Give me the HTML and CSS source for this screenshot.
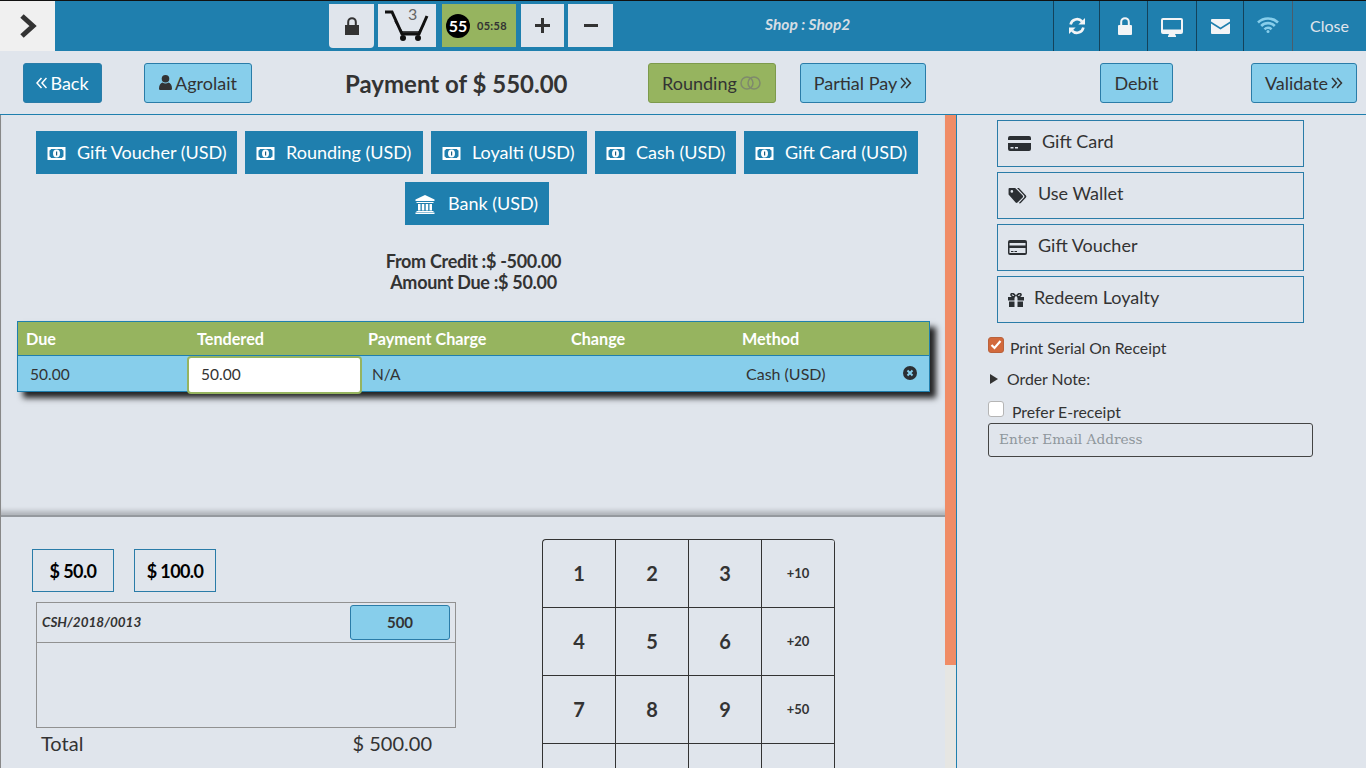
FILE: index.html
```html
<!DOCTYPE html>
<html lang="en">
<head>
    <meta charset="UTF-8">
    <meta name="viewport" content="width=device-width, initial-scale=1.0">
    <title>Payment</title>
    <link rel="stylesheet" href="styles.css">
</head>
<body>
    <!-- Top bar -->
    <header class="topbar">
        <div class="toggle">
            <svg width="18" height="24" viewBox="0 0 18 24"><path d="M3 2l11 10L3 22" fill="none" stroke="#333" stroke-width="5"/></svg>
        </div>
        <div class="tools">
            <div class="tool tool-lock">
                <svg width="14" height="18" viewBox="0 0 14 18"><path d="M0 8h14v10H0z" fill="#333"/><path d="M3.2 9V5a3.8 3.8 0 0 1 7.6 0v4" fill="none" stroke="#333" stroke-width="2"/></svg>
            </div>
            <div class="tool tool-cart">
                <svg width="44" height="31" viewBox="0 0 44 31"><path d="M0 2h7l10 22h17l8-18" fill="none" stroke="#111" stroke-width="3"/><path d="M10 11l7 11h17l5-8" fill="none" stroke="#111" stroke-width="1.500"/><circle cx="18" cy="28" r="3" fill="#111"/><circle cx="33" cy="28" r="3" fill="#111"/></svg>
                <span class="cart-count">3</span>
            </div>
            <div class="tool tool-timer">
                <span class="timer-ball">55</span>
                <span class="timer-time">05:58</span>
            </div>
            <div class="tool tool-plus"><span class="sign"></span></div>
            <div class="tool tool-minus"><span class="sign sign-minus"></span></div>
        </div>
        <div class="shop-name">Shop : Shop2</div>
        <div class="status-bar">
            <div class="status status-sync">
                <svg width="18" height="18" viewBox="0 0 18 18"><path d="M2.600 7.400A6.600 6.600 0 0 1 14 4.400" fill="none" stroke="#f2f4f6" stroke-width="2.600"/><path d="M17 1v6.600h-6.600z" fill="#f2f4f6"/><path d="M15.400 10.600A6.600 6.600 0 0 1 4 13.600" fill="none" stroke="#f2f4f6" stroke-width="2.600"/><path d="M1 17v-6.600h6.600z" fill="#f2f4f6"/></svg>
            </div>
            <div class="status status-lock">
                <svg width="14" height="18" viewBox="0 0 14 18"><path d="M1 8h12a1 1 0 0 1 1 1v8a1 1 0 0 1-1 1H1a1 1 0 0 1-1-1V9a1 1 0 0 1 1-1z" fill="#f2f4f6"/><path d="M3.200 9V5a3.800 3.800 0 0 1 7.600 0v4" fill="none" stroke="#f2f4f6" stroke-width="2"/></svg>
            </div>
            <div class="status status-screen">
                <svg width="22" height="19" viewBox="0 0 22 19"><path d="M2 0h18a2 2 0 0 1 2 2v12a2 2 0 0 1-2 2h-6l1 2v1H7v-1l1-2H2a2 2 0 0 1-2-2V2a2 2 0 0 1 2-2zm0 2v9.500h18V2z" fill="#f2f4f6" fill-rule="evenodd"/></svg>
            </div>
            <div class="status status-mail">
                <svg width="19" height="15" viewBox="0 0 19 15"><path d="M1 0h17a1 1 0 0 1 1 1v1.500l-9.500 6L0 2.500V1a1 1 0 0 1 1-1z" fill="#f2f4f6"/><path d="M0 4.500l9.500 6 9.500-6V14a1 1 0 0 1-1 1H1a1 1 0 0 1-1-1z" fill="#f2f4f6"/></svg>
            </div>
            <div class="status status-wifi">
                <svg width="22" height="16" viewBox="0 0 22 16"><g fill="none" stroke="#87ceeb" stroke-width="2.600"><path d="M1 5.500a14.500 14.500 0 0 1 20 0"/><path d="M4.200 9a9.500 9.500 0 0 1 13.600 0"/><path d="M7.500 12.300a4.800 4.800 0 0 1 7 0"/></g><circle cx="11" cy="14.500" r="1.500" fill="#87ceeb"/></svg>
            </div>
            <div class="status status-close">Close</div>
        </div>
    </header>

    <!-- Payment actions -->
    <div class="actions">
        <button class="btn btn-back">
            <svg class="chev" width="11" height="12" viewBox="0 0 11 12"><path d="M5.500 1L1 6l4.500 5M10.500 1L6 6l4.500 5" fill="none" stroke="#fff" stroke-width="1.500"/></svg>
            Back
        </button>
        <button class="btn btn-customer">
            <svg width="13" height="15" viewBox="0 0 13 15"><circle cx="6.500" cy="3.800" r="3.800" fill="#333"/><path d="M0 13.500C0 10 1.500 8 3.500 7.500c1.800 1.300 4.200 1.300 6 0C11.500 8 13 10 13 13.500c0 1-.7 1.500-1.500 1.500h-10C.7 15 0 14.500 0 13.500z" fill="#333"/></svg>
            Agrolait
        </button>
        <h1 class="title">Payment of $ 550.00</h1>
        <button class="btn btn-rounding">
            Rounding
            <svg width="21" height="14" viewBox="0 0 21 14"><circle cx="7" cy="7" r="6" fill="none" stroke="#7f8a6c" stroke-width="1.500"/><circle cx="14" cy="7" r="6" fill="none" stroke="#7f8a6c" stroke-width="1.500"/></svg>
        </button>
        <button class="btn btn-partial">
            Partial Pay
            <svg class="chev" width="12" height="12" viewBox="0 0 11 12"><path d="M.5 1L5 6l-4.500 5M5.500 1L10 6l-4.500 5" fill="none" stroke="#333" stroke-width="1.500"/></svg>
        </button>
        <button class="btn btn-debit">Debit</button>
        <button class="btn btn-validate">
            Validate
            <svg class="chev" width="12" height="12" viewBox="0 0 11 12"><path d="M.5 1L5 6l-4.500 5M5.500 1L10 6l-4.500 5" fill="none" stroke="#333" stroke-width="1.500"/></svg>
        </button>
    </div>

    <div class="content">
        <main class="left">
            <section class="left-top">
                <div class="methods">
                    <button class="method m-gift"><svg class="money" width="19" height="13" viewBox="0 0 18 13"><path d="M0 0h18v13H0zM3.500 2a2 2 0 0 1-1.500 1.500v6A2 2 0 0 1 3.500 11h11a2 2 0 0 1 1.500-1.500v-6A2 2 0 0 1 14.500 2z" fill="#fff" fill-rule="evenodd"/><ellipse cx="9" cy="6.500" rx="3.500" ry="4" fill="#fff"/><path d="M8.500 4.500h1.200v4H8.500z" fill="#1f5f80"/></svg>Gift Voucher (USD)</button>
                    <button class="method m-round"><svg class="money" width="19" height="13" viewBox="0 0 18 13"><path d="M0 0h18v13H0zM3.500 2a2 2 0 0 1-1.500 1.500v6A2 2 0 0 1 3.500 11h11a2 2 0 0 1 1.500-1.500v-6A2 2 0 0 1 14.500 2z" fill="#fff" fill-rule="evenodd"/><ellipse cx="9" cy="6.500" rx="3.500" ry="4" fill="#fff"/><path d="M8.500 4.500h1.200v4H8.500z" fill="#1f5f80"/></svg>Rounding (USD)</button>
                    <button class="method m-loyal"><svg class="money" width="19" height="13" viewBox="0 0 18 13"><path d="M0 0h18v13H0zM3.500 2a2 2 0 0 1-1.500 1.500v6A2 2 0 0 1 3.500 11h11a2 2 0 0 1 1.500-1.500v-6A2 2 0 0 1 14.500 2z" fill="#fff" fill-rule="evenodd"/><ellipse cx="9" cy="6.500" rx="3.500" ry="4" fill="#fff"/><path d="M8.500 4.500h1.200v4H8.500z" fill="#1f5f80"/></svg>Loyalti (USD)</button>
                    <button class="method m-cash"><svg class="money" width="19" height="13" viewBox="0 0 18 13"><path d="M0 0h18v13H0zM3.500 2a2 2 0 0 1-1.500 1.500v6A2 2 0 0 1 3.500 11h11a2 2 0 0 1 1.500-1.500v-6A2 2 0 0 1 14.500 2z" fill="#fff" fill-rule="evenodd"/><ellipse cx="9" cy="6.500" rx="3.500" ry="4" fill="#fff"/><path d="M8.500 4.500h1.200v4H8.500z" fill="#1f5f80"/></svg>Cash (USD)</button>
                    <button class="method m-card"><svg class="money" width="19" height="13" viewBox="0 0 18 13"><path d="M0 0h18v13H0zM3.500 2a2 2 0 0 1-1.500 1.500v6A2 2 0 0 1 3.500 11h11a2 2 0 0 1 1.500-1.500v-6A2 2 0 0 1 14.500 2z" fill="#fff" fill-rule="evenodd"/><ellipse cx="9" cy="6.500" rx="3.500" ry="4" fill="#fff"/><path d="M8.500 4.500h1.200v4H8.500z" fill="#1f5f80"/></svg>Gift Card (USD)</button>
                    <button class="method m-bank"><svg class="bank" width="20" height="19" viewBox="0 0 20 19"><path d="M10 0l9.500 4.500V6H.5V4.500z" fill="#fff"/><path d="M1.500 7h17v1h-17zM3 9h2.500v6.500H3zM6.800 9h2.500v6.500H6.800zM10.700 9h2.500v6.500h-2.500zM14.500 9H17v6.500h-2.500zM1.500 16h17v1h-17zM.5 17.500h19V19H.5z" fill="#fff"/></svg>Bank (USD)</button>
                </div>
                <div class="summary">
                    <div>From Credit :$ -500.00</div>
                    <div>Amount Due :$ 50.00</div>
                </div>
                <div class="lines">
                    <div class="lines-head">
                        <span class="col-due">Due</span>
                        <span class="col-tendered">Tendered</span>
                        <span class="col-charge">Payment Charge</span>
                        <span class="col-change">Change</span>
                        <span class="col-method">Method</span>
                    </div>
                    <div class="lines-row">
                        <span class="col-due">50.00</span>
                        <input class="tendered" type="text" value="50.00">
                        <span class="col-charge">N/A</span>
                        <span class="col-change"></span>
                        <span class="col-method">Cash (USD)</span>
                        <svg class="remove" width="14" height="14" viewBox="0 0 14 14"><circle cx="7" cy="7" r="7" fill="#2b2f33"/><path d="M4.500 4.500l5 5m0-5l-5 5" stroke="#87ceeb" stroke-width="2"/></svg>
                    </div>
                </div>
            </section>

            <section class="left-bottom">
                <div class="credits">
                    <div class="quick">
                        <button class="quick-btn">$ 50.0</button>
                        <button class="quick-btn">$ 100.0</button>
                    </div>
                    <div class="credit-box">
                        <div class="credit-row">
                            <em>CSH/2018/0013</em>
                            <button class="credit-btn">500</button>
                        </div>
                    </div>
                    <div class="credit-total">
                        <span>Total</span>
                        <span>$ 500.00</span>
                    </div>
                </div>
                <div class="keypad">
                    <div class="key">1</div><div class="key">2</div><div class="key">3</div><div class="key key-add">+10</div>
                    <div class="key">4</div><div class="key">5</div><div class="key">6</div><div class="key key-add">+20</div>
                    <div class="key">7</div><div class="key">8</div><div class="key">9</div><div class="key key-add">+50</div>
                    <div class="key"></div><div class="key"></div><div class="key"></div><div class="key key-add"></div>
                </div>
            </section>
        </main>

        <div class="scrollbar"><div class="scroll-thumb"></div></div>

        <aside class="right">
            <button class="side-btn">
                <svg class="ic-card" width="23" height="15" viewBox="0 0 23 15"><path d="M2 0h19a2 2 0 0 1 2 2v2H0V2a2 2 0 0 1 2-2zM0 7h23v6a2 2 0 0 1-2 2H2a2 2 0 0 1-2-2zm2.500 4v1.500h3V11zm4.500 0v1.500h3V11z" fill="#2b2f33" fill-rule="evenodd"/></svg>
                <span class="side-label">Gift Card</span>
            </button>
            <button class="side-btn">
                <svg class="ic-tags" width="19" height="16" viewBox="0 0 19 17"><path d="M1 0h6l8 8a1.500 1.500 0 0 1 0 2l-5.500 5.500a1.500 1.500 0 0 1-2 0L0 7V1a1 1 0 0 1 1-1zm2.500 2.200a1.400 1.400 0 1 0 0 2.800 1.400 1.400 0 0 0 0-2.800z" fill="#2b2f33" fill-rule="evenodd"/><path d="M9 0h2l7.500 8a1.500 1.500 0 0 1 0 2L13 16a1.500 1.500 0 0 1-2 0l5.500-6a1.500 1.500 0 0 0 0-2z" fill="#2b2f33"/></svg>
                <span class="side-label">Use Wallet</span>
            </button>
            <button class="side-btn">
                <svg class="ic-voucher" width="19" height="15" viewBox="0 0 19 15"><path d="M2 0h15a2 2 0 0 1 2 2v11a2 2 0 0 1-2 2H2a2 2 0 0 1-2-2V2a2 2 0 0 1 2-2zM1.500 3v2.500h16V3zm0 5v5h16V8zM3 11h2.500v1H3zm3.500 0H9v1H6.500z" fill="#2b2f33" fill-rule="evenodd"/></svg>
                <span class="side-label">Gift Voucher</span>
            </button>
            <button class="side-btn">
                <svg class="ic-gift" width="16" height="14" viewBox="0 0 16 14"><path d="M0 4h16v3.500H0zM1 8.500h14V14H1z" fill="#2b2f33"/><path d="M6.500 3h3v11h-3z" fill="#e0e5ec"/><path d="M7 3.800C4 3.800 2.800 2.800 3 1.500 3.300 0 6 0 7.500 3.300M9 3.800c3 0 4.200-1 4-2.300C12.700 0 10 0 8.500 3.300" fill="none" stroke="#2b2f33" stroke-width="1.600"/></svg>
                <span class="side-label">Redeem Loyalty</span>
            </button>
            <label class="option option-serial">
                <span class="check check-on">
                    <svg width="12" height="10" viewBox="0 0 12 10"><path d="M1.500 5l3 3 6-7" fill="none" stroke="#fff" stroke-width="2.200"/></svg>
                </span>
                Print Serial On Receipt
            </label>
            <div class="option option-note"><span class="arrow"></span>Order Note:</div>
            <label class="option option-ereceipt">
                <span class="check"></span>
                Prefer E-receipt
            </label>
            <input class="email" type="text" placeholder="Enter Email Address">
        </aside>
    </div>
</body>
</html>
```

FILE: styles.css
```css
* {
    box-sizing: border-box;
}

html, body {
    height: 100%;
}

body {
    margin: 0;
    overflow: hidden;
    background-color: #e0e5ec;
    border-top: 1px solid #111;
    font-family: Lato, "Open Sans", sans-serif;
    color: #333;
}

button {
    font-family: inherit;
    cursor: pointer;
}

/* Top bar */
.topbar {
    display: flex;
    height: 50px;
    background-color: #1f7fae;
}

.toggle {
    display: flex;
    align-items: center;
    justify-content: center;
    width: 55px;
    background-color: #f0f0f0;
}

.tools {
    display: flex;
    gap: 4px;
    margin-left: 274px;
    padding-top: 3px;
    height: 47px;
}

.tool {
    display: flex;
    align-items: center;
    justify-content: center;
    height: 43px;
    background-color: #e0e5ec;
}

.tool-lock {
    width: 45px;
    height: 44px;
    border-radius: 0 0 4px 4px;
}

.tool-cart {
    position: relative;
    width: 58px;
}

.cart-count {
    position: absolute;
    top: 0;
    left: 30px;
    font-size: 16px;
    color: #666;
}

.tool-timer {
    width: 74px;
    margin-left: 2px;
    padding-left: 4px;
    justify-content: flex-start;
    gap: 7px;
    background-color: #96b45f;
}

.timer-ball {
    width: 24px;
    height: 24px;
    border-radius: 50%;
    background-color: #000;
    color: #fff;
    font-size: 16px;
    font-weight: 700;
    line-height: 24px;
    text-align: center;
}

.timer-time {
    font-size: 11px;
    font-weight: 700;
    letter-spacing: 0.3px;
    color: #333;
}

.tool-plus {
    width: 43px;
    margin-left: 1px;
}

.tool-minus {
    width: 45px;
}

.sign {
    position: relative;
    width: 15px;
    height: 3px;
    background-color: #333;
}

.sign::after {
    content: "";
    position: absolute;
    left: 6px;
    top: -6px;
    width: 3px;
    height: 15px;
    background-color: #333;
}

.sign-minus {
    width: 14px;
}

.sign-minus::after {
    display: none;
}

.shop-name {
    margin-left: 152px;
    padding-top: 14px;
    font-size: 15.5px;
    font-weight: 700;
    font-style: italic;
    color: #d5dde4;
}

.status-bar {
    display: flex;
    margin-left: auto;
}

.status {
    display: flex;
    align-items: center;
    justify-content: center;
    width: 48px;
    border-left: 1px solid #14425a;
}

.status-sync {
    width: 46px;
}

.status-lock {
    width: 48px;
    padding-left: 2px;
}

.status-screen {
    width: 49px;
    padding-top: 2px;
}

.status-mail {
    width: 47px;
}

.status-wifi {
    width: 49px;
    padding-bottom: 2px;
}

.status-close {
    width: 74px;
    padding-bottom: 2px;
    font-size: 16px;
    color: #e0e5ec;
    border-left-color: #4a5d6b;
}

/* Payment actions */
.actions {
    display: flex;
    align-items: center;
    height: 64px;
    padding-left: 23px;
    border-bottom: 1px solid #1f7fae;
}

.btn {
    display: flex;
    align-items: center;
    justify-content: center;
    gap: 3px;
    height: 40px;
    padding: 0;
    font-size: 18px;
    color: #333;
    background-color: #87ceeb;
    border: 1px solid #2a7ca8;
    border-radius: 3px;
}

.btn-back {
    width: 79px;
    background-color: #1f7fae;
    color: #fff;
}

.btn-customer {
    width: 108px;
    margin-left: 42px;
}

.title {
    width: 222px;
    margin: 2px 0 0 93px;
    font-size: 24px;
    font-weight: 700;
    white-space: nowrap;
    text-align: center;
}

.btn-rounding {
    width: 128px;
    margin-left: 81px;
    padding-left: 13px;
    justify-content: flex-start;
    background-color: #96b45f;
    border-color: #7d9a4c;
}

.btn-partial {
    width: 126px;
    margin-left: 24px;
}

.btn-debit {
    width: 73px;
    margin-left: 174px;
}

.btn-validate {
    width: 106px;
    margin-left: 78px;
}

/* Main area */
.content {
    display: flex;
    height: 653px;
    overflow: hidden;
}

.left {
    width: 945px;
    flex: none;
    border-left: 1px solid #888;
}

.left-top {
    height: 402px;
    padding-top: 16px;
    border-bottom: 2px solid #95999e;
    box-shadow: inset 0 -7px 5px -3px rgba(0, 0, 0, 0.22);
}

.methods {
    display: flex;
    flex-wrap: wrap;
    justify-content: center;
    gap: 8px;
    width: 882px;
    margin-left: 35px;
}

.method {
    display: flex;
    align-items: center;
    height: 43px;
    padding: 0 0 2px 11px;
    font-size: 18px;
    color: #fff;
    background-color: #1f7fae;
    border: none;
    white-space: nowrap;
}

.m-gift {
    width: 201px;
}

.m-round {
    width: 178px;
}

.m-loyal {
    width: 156px;
}

.m-cash {
    width: 141px;
}

.m-card {
    width: 174px;
}

.m-bank {
    width: 144px;
    padding-left: 10px;
}

.money {
    margin: 4px 11px 0 0;
}

.bank {
    margin: 3px 13px 0 0;
}

.summary {
    width: 945px;
    margin-top: 26px;
    font-size: 18px;
    font-weight: 700;
    line-height: 21px;
    letter-spacing: -0.3px;
    text-align: center;
}

.lines {
    width: 913px;
    margin: 28px 0 0 16px;
    border: 1px solid #1f7fae;
    box-shadow: 6px 6px 6px rgba(0, 0, 0, 0.85);
}

.lines-head, .lines-row {
    display: flex;
    align-items: center;
}

.lines-head {
    height: 34px;
    font-size: 16.2px;
    background-color: #96b45f;
    border-bottom: 1px solid #1f7fae;
    color: #fff;
    font-weight: 700;
}

.lines-row {
    position: relative;
    height: 35px;
    font-size: 15.5px;
    background-color: #87ceeb;
}

.lines span {
    display: block;
}

.lines-head .col-due {
    width: 179px;
    padding-left: 8px;
}

.lines-head .col-tendered {
    width: 171px;
}

.lines-head .col-charge {
    width: 203px;
}

.lines-head .col-change {
    width: 171px;
}

.lines-row .col-due {
    width: 169px;
    padding-left: 12px;
}

.tendered {
    position: relative;
    width: 175px;
    height: 38px;
    margin-top: 2px;
    padding: 0 0 2px 12px;
    font-family: inherit;
    font-size: 15.5px;
    color: #333;
    background-color: #fff;
    border: 2px solid #96b45f;
    border-radius: 4px;
    outline: none;
}

.lines-row .col-charge {
    width: 203px;
    padding-left: 10px;
}

.lines-row .col-change {
    width: 171px;
}

.lines-row .col-method {
    padding-left: 10px;
    font-size: 16px;
}

.remove {
    position: absolute;
    right: 12px;
    top: 10px;
}

/* Credits and keypad */
.left-bottom {
    display: flex;
    align-items: flex-start;
    padding-top: 22px;
}

.credits {
    width: 541px;
    padding: 10px 0 0 31px;
}

.quick {
    display: flex;
    gap: 20px;
}

.quick-btn {
    width: 82px;
    height: 43px;
    padding: 0;
    font-size: 18px;
    font-weight: 700;
    letter-spacing: -0.6px;
    color: #000;
    background: transparent;
    border: 1px solid #2a7ca8;
}

.credit-box {
    width: 420px;
    height: 126px;
    margin: 10px 0 0 4px;
    border: 1px solid #919191;
}

.credit-row {
    display: flex;
    align-items: center;
    justify-content: space-between;
    height: 40px;
    padding: 0 5px 0 5px;
    border-bottom: 1px solid #919191;
    font-size: 13.5px;
    font-weight: 700;
}

.credit-row em {
    padding-bottom: 2px;
}

.credit-btn {
    width: 100px;
    height: 35px;
    padding: 0 0 1px;
    font-size: 15px;
    font-weight: 700;
    color: #333;
    background-color: #87ceeb;
    border: 1px solid #2a7ca8;
    border-radius: 3px;
}

.credit-total {
    display: flex;
    justify-content: space-between;
    width: 391px;
    margin: 3px 0 0 9px;
    font-size: 20px;
    line-height: 24px;
}

.keypad {
    display: grid;
    grid-template-columns: repeat(4, 73px);
    grid-auto-rows: 68px;
    width: 293px;
    border-top: 1px solid #333;
    border-left: 1px solid #333;
    border-radius: 4px 4px 0 0;
    overflow: hidden;
}

.key {
    display: flex;
    align-items: center;
    justify-content: center;
    padding-bottom: 2px;
    border-right: 1px solid #333;
    border-bottom: 1px solid #333;
    font-size: 20px;
    font-weight: 700;
}

.key-add {
    font-size: 13px;
}

.scrollbar {
    width: 12px;
    flex: none;
    height: 100%;
    background-color: #e6e6e3;
    border-right: 1px solid #1f7fae;
}

.scroll-thumb {
    height: 550px;
    background-color: #f08c66;
}

/* Right panel */
.right {
    flex: 1;
    padding: 5px 0 0 31px;
}

.side-btn {
    display: flex;
    align-items: center;
    width: 307px;
    height: 47px;
    margin: 0 0 5px 9px;
    padding: 0 0 0 10px;
    font-size: 18px;
    color: #333;
    background: transparent;
    border: 1px solid #2a7ca8;
}

.side-label {
    padding-bottom: 6px;
}

.ic-card {
    margin-right: 11px;
}

.ic-tags {
    margin-right: 11px;
}

.ic-voucher {
    margin-right: 11px;
}

.ic-gift {
    margin-right: 10px;
}

.option {
    display: flex;
    align-items: center;
    font-size: 15.8px;
    color: #333;
}

.option-serial {
    margin-top: 16px;
    height: 17px;
}

.check {
    display: flex;
    align-items: center;
    justify-content: center;
    width: 16px;
    height: 16px;
    margin-top: -5px;
    background-color: #fff;
    border: 1px solid #b5b5b5;
    border-radius: 3px;
}

.check-on {
    background-color: #d2693c;
    border-color: #b9623c;
}

.option-serial .check {
    margin-right: 6px;
}

.option-note {
    margin-top: 14px;
    height: 17px;
}

.arrow {
    width: 0;
    height: 0;
    margin: 0 9px 0 2px;
    border-left: 8px solid #333;
    border-top: 5px solid transparent;
    border-bottom: 5px solid transparent;
}

.option-ereceipt {
    margin-top: 14px;
    height: 20px;
}

.option-ereceipt .check {
    margin-right: 8px;
    margin-top: -4px;
}

.email {
    display: block;
    width: 325px;
    height: 34px;
    margin-top: 2px;
    padding: 0 10px 2px;
    font-family: "DejaVu Serif", serif;
    font-size: 13.7px;
    background: transparent;
    border: 1px solid #444;
    border-radius: 3px;
}

.email::placeholder {
    color: #8f979c;
}
```
